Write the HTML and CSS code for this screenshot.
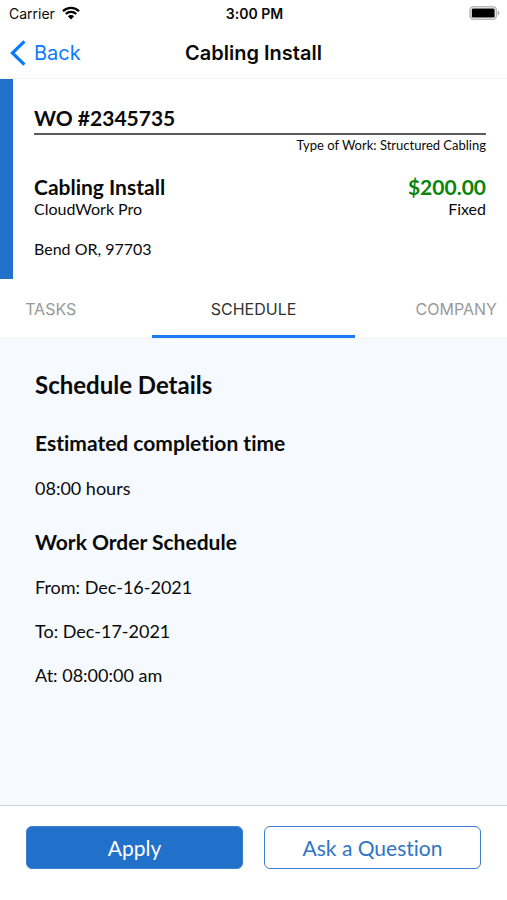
FILE: index.html
```html
<!DOCTYPE html>
<html lang="en">
<head>
<meta charset="utf-8">
<meta name="viewport" content="width=device-width, initial-scale=1">
<title>Cabling Install</title>
<link rel="stylesheet" href="styles.css">
</head>
<body>
<div class="status">
  <div class="carrier">
    <span>Carrier</span>
    <svg class="wifi" viewBox="0 0 18 14" aria-hidden="true">
      <path d="M1 5.2a11.4 11.4 0 0 1 16 0M3.8 8a7.4 7.4 0 0 1 10.4 0" fill="none" stroke="#000" stroke-width="2.3"/>
      <path d="M9 13.5 5.8 10.2a4.6 4.6 0 0 1 6.4 0z" fill="#000"/>
    </svg>
  </div>
  <time class="clock">3:00 PM</time>
  <svg class="battery" viewBox="0 0 31 14" aria-hidden="true">
    <rect x="1" y=".8" width="26.4" height="12.4" rx="3.6" fill="#fff" stroke="#b9b9b9" stroke-width="1.6"/>
    <rect x="2.8" y="2.4" width="22.8" height="9.2" rx="1.4" fill="#000"/>
    <path d="M28.8 4.6c2.2.8 2.2 4 0 4.8z" fill="#aaa"/>
  </svg>
</div>
<header class="nav">
  <a class="back" href="#">
    <svg class="chevron" viewBox="0 0 16 26" aria-hidden="true"><path d="M14.4 1.4 2.4 13l12 11.6" fill="none" stroke="#0a7aff" stroke-width="3.2"/></svg>
    <span>Back</span>
  </a>
  <h1 class="title">Cabling Install</h1>
</header>
<section class="order">
  <h2 class="number">WO #2345735</h2>
  <p class="kind">Type of Work: Structured Cabling</p>
  <div class="row lead">
    <h3>Cabling Install</h3>
    <strong class="price">$200.00</strong>
  </div>
  <div class="row">
    <span>CloudWork Pro</span>
    <span>Fixed</span>
  </div>
  <p class="place">Bend OR, 97703</p>
</section>
<nav class="tabs">
  <button class="tab" type="button">TASKS</button>
  <button class="tab active" type="button">SCHEDULE</button>
  <button class="tab" type="button">COMPANY</button>
</nav>
<main class="details">
  <h2>Schedule Details</h2>
  <h3>Estimated completion time</h3>
  <p>08:00 hours</p>
  <h3>Work Order Schedule</h3>
  <p>From: Dec-16-2021</p>
  <p>To: Dec-17-2021</p>
  <p>At: 08:00:00 am</p>
</main>
<footer class="actions">
  <button class="btn primary" type="button">Apply</button>
  <button class="btn" type="button">Ask a Question</button>
</footer>
</body>
</html>
```

FILE: styles.css
```css
* {
  box-sizing: border-box;
}

body {
  margin: 0;
  min-height: 100vh;
  display: flex;
  flex-direction: column;
  background: #fff;
  color: #0a0a0a;
  font-family: Lato, sans-serif;
  font-variant-ligatures: none;
  overflow-x: hidden;
}

h1, h2, h3, p {
  margin: 0;
}

button {
  font: inherit;
  font-variant-ligatures: none;
  cursor: pointer;
}

.status, .nav {
  display: grid;
  grid-template-columns: 1fr auto 1fr;
  align-items: center;
  font-family: Inter, sans-serif;
}

.status {
  height: 26px;
  padding: 0 7px 0 9px;
  font-size: 14px;
}

.carrier {
  display: flex;
  align-items: center;
  gap: 7px;
}

.wifi {
  width: 18px;
  height: 14px;
}

.clock {
  font-weight: 600;
}

.battery {
  justify-self: end;
  width: 31px;
  height: 14px;
}

.nav {
  height: 53px;
  padding: 1px 10px 0;
  border-bottom: 1px solid #f4f4f5;
}

.back {
  display: flex;
  align-items: center;
  gap: 8px;
  color: #0a7aff;
  font-size: 20px;
  text-decoration: none;
}

.chevron {
  width: 16px;
  height: 26px;
}

.title {
  font-size: 20px;
  font-weight: 600;
}

.order {
  padding: 26px 21px 20px;
  border-left: 13px solid #2170ca;
  font-size: 16px;
  line-height: 20px;
}

.number {
  padding-bottom: 2px;
  border-bottom: 2px solid #5b5b5b;
  font-size: 21px;
  line-height: 26px;
}

.kind {
  font-size: 13px;
  text-align: right;
}

.row {
  display: flex;
  justify-content: space-between;
}

.lead {
  margin-top: 19px;
  font-size: 21px;
  line-height: 25px;
}

.lead h3 {
  font-size: inherit;
}

.price {
  color: #0b840b;
}

.place {
  margin-top: 20px;
}

.tabs {
  display: flex;
  justify-content: center;
  overflow: hidden;
  border-bottom: 1px solid #eef1f5;
}

.tab {
  flex: 0 0 40%;
  height: 59px;
  padding: 3px 0 0;
  border: 0;
  border-bottom: 3px solid transparent;
  background: none;
  color: #999;
  font-family: Inter, sans-serif;
  font-size: 16px;
}

.active {
  border-color: #1a7cf0;
  color: #333;
}

.details {
  flex: 1;
  padding: 30px 35px;
  background: #f6faff;
  font-size: 18px;
  line-height: 24px;
}

.details h2 {
  font-size: 24px;
  line-height: 32px;
}

.details h3 {
  margin-top: 29px;
  font-size: 21px;
  line-height: 26px;
}

.details p {
  margin-top: 20px;
}

.actions {
  display: grid;
  grid-template-columns: 1fr 1fr;
  gap: 21px;
  padding: 20px 26px 31px;
  border-top: 1px solid #cfd3d8;
}

.btn {
  height: 43px;
  padding: 0;
  border: 1px solid #3c80cf;
  border-radius: 6px;
  background: #fff;
  color: #2f75c4;
  font-size: 21px;
}

.primary {
  background: #2170ca;
  color: #fff;
}
```
